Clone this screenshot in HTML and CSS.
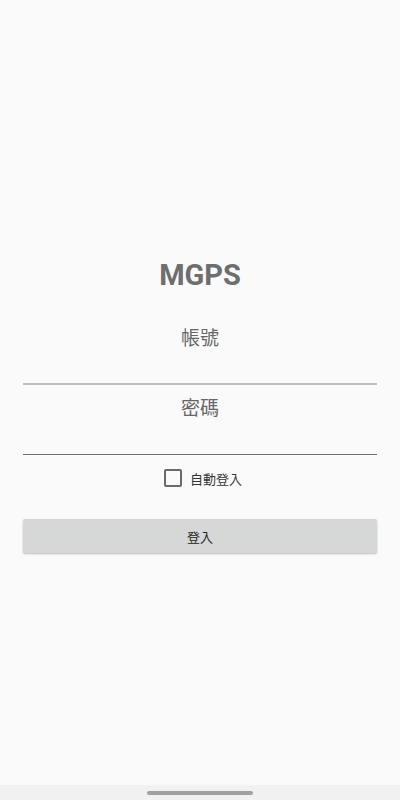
FILE: index.html
```html
<!DOCTYPE html>
<html lang="zh-Hant">
<head>
    <meta charset="UTF-8">
    <meta name="viewport" content="width=device-width, initial-scale=1.0">
    <title>MGPS</title>
    <link rel="stylesheet" href="styles.css">
</head>
<body>
    <div class="screen">
        <main class="login">
            <h1 class="title">MGPS</h1>
            <div class="field field-account">
                <span class="hint">帳號</span>
            </div>
            <div class="field field-password">
                <span class="hint">密碼</span>
            </div>
            <label class="remember">
                <span class="box"></span>
                <span class="remember-text">自動登入</span>
            </label>
            <button class="login-btn" type="button">登入</button>
        </main>
        <footer class="nav-bar">
            <div class="handle"></div>
        </footer>
    </div>
</body>
</html>
```

FILE: styles.css
```css
/* Login screen */
body {
    margin: 0;
    padding: 0;
    background-color: #fafafa;
    font-family: Roboto, "Noto Sans CJK TC", sans-serif;
}

.screen {
    height: 800px;
    display: flex;
    flex-direction: column;
}

.login {
    flex: 1;
    padding: 260px 23px 0;
    display: flex;
    flex-direction: column;
}

.title {
    margin: 0;
    height: 30px;
    line-height: 30px;
    font-size: 29px;
    font-weight: bold;
    color: #6e6e6e;
    text-align: center;
}

.field {
    text-align: center;
}

.hint {
    display: block;
    height: 26px;
    line-height: 26px;
    font-size: 19px;
    color: #666;
    font-family: "Noto Sans CJK TC", sans-serif;
}

.field-account {
    margin-top: 34px;
    padding-bottom: 33px;
    border-bottom: 2px solid #bdbdbd;
}

.field-password {
    margin-top: 9px;
    padding-bottom: 34px;
    border-bottom: 1px solid #707070;
}

.remember {
    margin-top: 14px;
    padding-left: 6px;
    height: 18px;
    display: flex;
    align-items: center;
    justify-content: center;
    gap: 8px;
}

.box {
    width: 18px;
    height: 18px;
    box-sizing: border-box;
    border: 2px solid #6a6a6a;
    border-radius: 2px;
}

.remember-text {
    font-size: 13px;
    color: #333;
    font-family: "Noto Sans CJK TC", sans-serif;
}

.login-btn {
    margin-top: 32px;
    height: 34px;
    border: none;
    border-radius: 2px;
    background-color: #d6d7d7;
    box-shadow: 0 1px 2px rgba(0, 0, 0, 0.25);
    font-size: 13px;
    color: #222;
    font-family: "Noto Sans CJK TC", sans-serif;
}

.nav-bar {
    height: 15px;
    background-color: #f1f1f1;
    display: flex;
    justify-content: center;
}

.handle {
    margin-top: 6px;
    width: 106px;
    height: 4px;
    border-radius: 2px;
    background-color: #a0a0a0;
}
```
